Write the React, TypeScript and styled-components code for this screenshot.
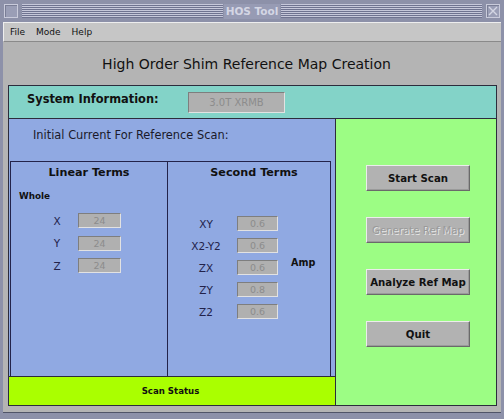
import React from "react";
import styled, { createGlobalStyle } from "styled-components";

const Global = createGlobalStyle`
  html, body { margin: 0; padding: 0; }
  body { font-family: "DejaVu Sans", "Liberation Sans", sans-serif; background: #8d91a9; }
`;

const Frame = styled.div`
  width: 504px;
  height: 419px;
  box-sizing: border-box;
  background: #8d91a9;
  padding: 0 3px 6px 3px;
  display: flex;
  flex-direction: column;
`;

const TitleBar = styled.div`
  height: 22px;
  display: flex;
  align-items: center;
  gap: 4px;
  padding: 0 1px;
  box-sizing: border-box;
`;

const WinBox = styled.div`
  width: 14px;
  height: 14px;
  box-sizing: border-box;
  border: 1px solid #c9cbdb;
  background: #9a9eb6;
  box-shadow: inset 1px 1px 0 #7a7e96;
  display: flex;
  align-items: center;
  justify-content: center;
`;

const Stripes = styled.div`
  flex: 1;
  height: 14px;
  background: repeating-linear-gradient(
    to bottom,
    #c6c8da 0px,
    #c6c8da 1px,
    #6f7390 1px,
    #6f7390 2px
  );
`;

const TitleText = styled.span`
  font-weight: bold;
  font-size: 10.5px;
  color: #d4d6e4;
  background: #979bb4;
  height: 15px;
  line-height: 15px;
  padding: 0 2px;
  margin: 0 -3px;
`;

const MenuBar = styled.div`
  height: 20px;
  background: #c6c6c6;
  border-top: 1px solid #eeeeee;
  border-left: 1px solid #eeeeee;
  border-bottom: 1px solid #8a8a8a;
  box-sizing: border-box;
  display: flex;
  align-items: center;
  gap: 11px;
  padding-left: 6px;
`;

const MenuItem = styled.span`
  font-size: 9px;
  color: #111;
`;

const Body = styled.div`
  flex: 1;
  background: #b4b4b4;
  border-bottom: 1px solid #505468;
  padding: 0 4px 6px 5px;
  display: flex;
  flex-direction: column;
`;

const Heading = styled.div`
  height: 43px;
  display: flex;
  align-items: center;
  justify-content: center;
  font-size: 14px;
  color: #111;
  padding-right: 12px;
`;

const SysPanel = styled.div`
  height: 33px;
  box-sizing: border-box;
  background: #83d3c8;
  border: 1px solid #2c2c3c;
  border-bottom: none;
  display: flex;
  align-items: center;
  padding-left: 18px;
`;

const SysLabel = styled.span`
  font-weight: bold;
  font-size: 11.4px;
  color: #111;
  width: 161px;
  margin-top: -6px;
`;

const Field = styled.div<{ w: number; h: number }>`
  width: ${({ w }) => w}px;
  height: ${({ h }) => h}px;
  box-sizing: border-box;
  background: #b0b0b0;
  border-top: 1px solid #7e7e7e;
  border-left: 1px solid #7e7e7e;
  border-bottom: 1px solid #e2e2e2;
  border-right: 1px solid #e2e2e2;
  color: #8c8c8c;
  font-size: ${({ h }) => (h > 18 ? 10 : 9.5)}px;
  display: flex;
  align-items: center;
  justify-content: center;
`;

const Main = styled.div`
  flex: 1;
  display: grid;
  grid-template-columns: 327px 1fr;
  border: 1px solid #2c2c3c;
`;

const LeftCol = styled.div`
  display: flex;
  flex-direction: column;
  border-right: 1px solid #2c2c3c;
`;

const BluePanel = styled.div`
  flex: 1;
  background: #90a9e2;
  display: flex;
  flex-direction: column;
  padding: 0 4px 0 1px;
`;

const Caption = styled.div`
  height: 42px;
  box-sizing: border-box;
  padding: 9px 0 0 23px;
  font-size: 11.4px;
  color: #1a1a2a;
`;

const Terms = styled.div`
  flex: 1;
  display: grid;
  grid-template-columns: 157px 1fr;
  border: 1px solid #23234a;
  border-bottom: none;
`;

const TermBox = styled.div<{ divider?: boolean }>`
  border-right: ${({ divider }) => (divider ? "1px solid #23234a" : "none")};
  display: flex;
  flex-direction: column;
`;

const BoxTitle = styled.div<{ shift: number }>`
  font-weight: bold;
  font-size: 11.2px;
  color: #111;
  text-align: center;
  padding-top: 4px;
  padding-left: ${({ shift }) => shift}px;
`;

const SubTitle = styled.div`
  font-weight: bold;
  font-size: 8.8px;
  color: #111;
  padding: 12px 0 0 8px;
`;

const Rows = styled.div<{ top: number; left: number; labelW: number; gap: number; rowGap: number }>`
  display: grid;
  grid-template-columns: ${({ labelW }) => labelW}px auto auto;
  column-gap: ${({ gap }) => gap}px;
  row-gap: ${({ rowGap }) => rowGap}px;
  justify-content: start;
  align-items: center;
  padding-top: ${({ top }) => top}px;
  padding-left: ${({ left }) => left}px;
`;

const Label = styled.span`
  font-size: 10.5px;
  color: #22224a;
  text-align: center;
  grid-column: 1;
`;

const Amp = styled.span`
  grid-column: 3;
  grid-row: 3;
  font-weight: bold;
  font-size: 9.6px;
  color: #111;
  margin-left: 3px;
  margin-top: -11px;
`;

const StatusBar = styled.div`
  height: 28px;
  background: #aaff00;
  border-top: 1px solid #2c2c3c;
  display: flex;
  align-items: center;
  justify-content: center;
  font-weight: bold;
  font-size: 8.6px;
  color: #111;
  padding-right: 3px;
`;

const GreenPanel = styled.div`
  background: #9cfd84;
  display: flex;
  flex-direction: column;
  align-items: flex-start;
  gap: 26px;
  padding: 46px 0 0 30px;
`;

const Button = styled.button<{ disabled?: boolean }>`
  width: 104px;
  height: 26px;
  box-sizing: border-box;
  background: #b2b2b2;
  border-top: 1px solid #ececec;
  border-left: 1px solid #ececec;
  border-bottom: 1px solid #6a6a6a;
  border-right: 1px solid #6a6a6a;
  box-shadow: inset -1px -1px 0 #9a9a9a;
  font-family: "DejaVu Sans", "Liberation Sans", sans-serif;
  font-size: 10.2px;
  padding: 0;
  color: ${({ disabled }) => (disabled ? "#9a9a9a" : "#111")};
  text-shadow: ${({ disabled }) => (disabled ? "1px 1px 0 #e6e6e6" : "none")};
  font-weight: ${({ disabled }) => (disabled ? "normal" : "bold")};
`;

const linear = ["X", "Y", "Z"];
const second: [string, string][] = [
  ["XY", "0.6"],
  ["X2-Y2", "0.6"],
  ["ZX", "0.6"],
  ["ZY", "0.8"],
  ["Z2", "0.6"],
];

export default function App() {
  return (
    <>
      <Global />
      <Frame>
        <TitleBar>
          <WinBox />
          <Stripes />
          <TitleText>HOS Tool</TitleText>
          <Stripes />
          <WinBox>
            <svg width="12" height="12" viewBox="0 0 12 12">
              <path d="M2 2 L10 10 M10 2 L2 10" stroke="#d4d6e4" strokeWidth="1.4" />
            </svg>
          </WinBox>
        </TitleBar>
        <MenuBar>
          <MenuItem>File</MenuItem>
          <MenuItem>Mode</MenuItem>
          <MenuItem>Help</MenuItem>
        </MenuBar>
        <Body>
          <Heading>High Order Shim Reference Map Creation</Heading>
          <SysPanel>
            <SysLabel>System Information:</SysLabel>
            <Field w={97} h={21}>3.0T XRMB</Field>
          </SysPanel>
          <Main>
            <LeftCol>
              <BluePanel>
                <Caption>Initial Current For Reference Scan:</Caption>
                <Terms>
                  <TermBox divider>
                    <BoxTitle shift={0}>Linear Terms</BoxTitle>
                    <SubTitle>Whole</SubTitle>
                    <Rows top={12} left={28} labelW={36} gap={3} rowGap={7.5}>
                      {linear.map((l) => (
                        <React.Fragment key={l}>
                          <Label>{l}</Label>
                          <Field w={43} h={15}>24</Field>
                        </React.Fragment>
                      ))}
                    </Rows>
                  </TermBox>
                  <TermBox>
                    <BoxTitle shift={10}>Second Terms</BoxTitle>
                    <Rows top={37} left={17} labelW={42} gap={10} rowGap={7}>
                      {second.map(([l, v]) => (
                        <React.Fragment key={l}>
                          <Label>{l}</Label>
                          <Field w={41} h={15}>{v}</Field>
                        </React.Fragment>
                      ))}
                      <Amp>Amp</Amp>
                    </Rows>
                  </TermBox>
                </Terms>
              </BluePanel>
              <StatusBar>Scan Status</StatusBar>
            </LeftCol>
            <GreenPanel>
              <Button>Start Scan</Button>
              <Button disabled>Generate Ref Map</Button>
              <Button>Analyze Ref Map</Button>
              <Button>Quit</Button>
            </GreenPanel>
          </Main>
        </Body>
      </Frame>
    </>
  );
}
